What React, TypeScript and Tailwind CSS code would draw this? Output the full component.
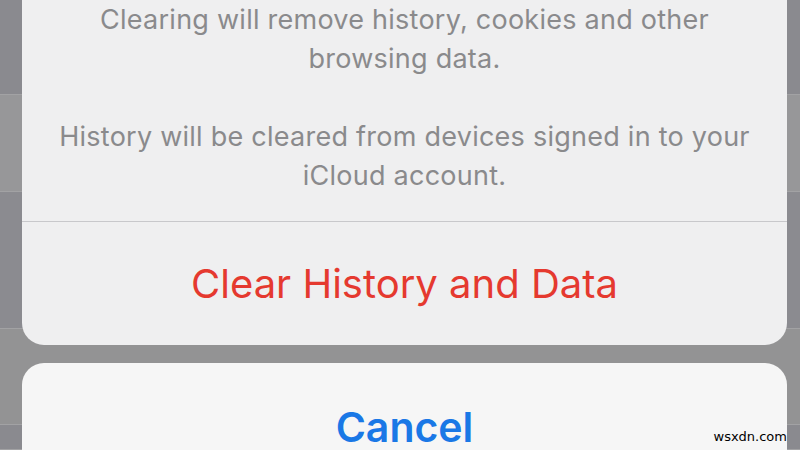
import React from 'react';

const rows = [
  { h: 'h-[95px]', bg: 'bg-[#8a8a8f]' },
  { h: 'h-[97px]', bg: 'bg-[#979799]' },
  { h: 'h-[137px]', bg: 'bg-[#8b8b90]' },
  { h: 'h-[96px]', bg: 'bg-[#939394]' },
  { h: 'h-[25px]', bg: 'bg-[#8a8a8f]' },
];

const App: React.FC = () => {
  return (
    <div className="relative w-[800px] h-[450px] overflow-hidden bg-[#939394]" style={{ fontFamily: 'Inter, "Noto Sans", sans-serif' }}>
      {/* list behind the sheet */}
      <div className="flex flex-col">
        {rows.map((r, i) => (
          <div key={i} className={`${r.h} ${r.bg} border-b border-[#a2a2a4]`} />
        ))}
      </div>

      {/* action sheet */}
      <div className="absolute inset-0 flex flex-col pl-[22px] pr-[13px]">
        <div className="bg-[#efeff0] rounded-b-[22px] flex flex-col">
          <div className="px-8 pb-[26px] text-center text-[27px] leading-[39px] text-[#8a8a8c] tracking-[0.25px]">
            <p>Clearing will remove history, cookies and other</p>
            <p>browsing data.</p>
            <p>&nbsp;</p>
            <p>History will be cleared from devices signed in to your</p>
            <p>iCloud account.</p>
          </div>
          <div className="border-t border-[#c8c8cb]" />
          <button className="h-[123px] flex items-center justify-center text-[40px] text-[#e5392f]">
            Clear History and Data
          </button>
        </div>
        <div className="mt-[18px] bg-[#f6f6f6] rounded-t-[22px] h-[124px] pt-[34px] flex items-center justify-center">
          <span className="text-[41px] font-semibold text-[#1a78e6]">Cancel</span>
        </div>
      </div>

      <span className="absolute right-[13px] bottom-[4px] text-[13px] text-black" style={{ fontFamily: '"DejaVu Sans", sans-serif' }}>
        wsxdn.com
      </span>
    </div>
  );
};

export default App;
